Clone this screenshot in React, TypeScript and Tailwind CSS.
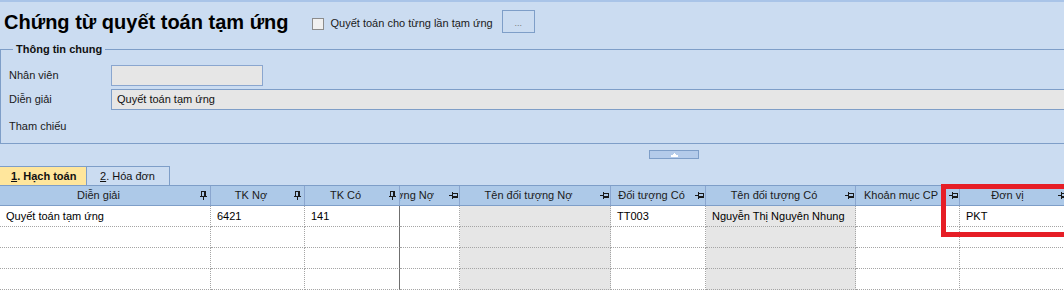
import React from "react";

type Col = { w: number; title: string; pin: "v" | "h"; gray?: boolean; clip?: boolean; solid?: boolean; val?: string };

const cols: Col[] = [
  { w: 211, title: "Diễn giải", pin: "v", val: "Quyết toán tạm ứng" },
  { w: 94, title: "TK Nợ", pin: "v", val: "6421" },
  { w: 95, title: "TK Có", pin: "v", solid: true, val: "141" },
  { w: 60, title: "Đối tượng Nợ", pin: "h", clip: true },
  { w: 151, title: "Tên đối tượng Nợ", pin: "h", gray: true },
  { w: 95, title: "Đối tượng Có", pin: "h", val: "TT003" },
  { w: 150, title: "Tên đối tượng Có", pin: "h", gray: true, val: "Nguyễn Thị Nguyên Nhung" },
  { w: 104, title: "Khoản mục CP", pin: "h" },
  { w: 109, title: "Đơn vị", pin: "h", val: "PKT" },
];

function PinV() {
  return (
    <svg width="7" height="9" viewBox="0 0 7 9" shapeRendering="crispEdges" className="block">
      <rect x="1" y="0" width="4" height="1" fill="#1a1a1a" />
      <rect x="1" y="0" width="1" height="5" fill="#1a1a1a" />
      <rect x="4" y="0" width="2" height="5" fill="#1a1a1a" />
      <rect x="0" y="5" width="7" height="1" fill="#1a1a1a" />
      <rect x="3" y="5" width="1" height="4" fill="#1a1a1a" />
    </svg>
  );
}

function PinH() {
  return (
    <svg width="9" height="7" viewBox="0 0 9 7" shapeRendering="crispEdges" className="block">
      <rect x="0" y="3" width="3" height="1" fill="#1a1a1a" />
      <rect x="3" y="0" width="1" height="7" fill="#1a1a1a" />
      <rect x="3" y="1" width="6" height="1" fill="#1a1a1a" />
      <rect x="3" y="4" width="6" height="2" fill="#1a1a1a" />
      <rect x="8" y="1" width="1" height="5" fill="#1a1a1a" />
    </svg>
  );
}

export default function App() {
  const rows = [0, 1, 2, 3];
  return (
    <div className="relative w-[1064px] h-[290px] overflow-hidden bg-[#cbdcf1] font-['Liberation_Sans',Arial,sans-serif] text-[11px] text-black">
      <div className="h-[2px] bg-[#a9c4e8]" />
      {/* Title row */}
      <div className="h-[40px] flex items-center pl-[4px] whitespace-nowrap">
        <h1 className="text-[20px] font-bold leading-none text-black">Chứng từ quyết toán tạm ứng</h1>
        <div className="ml-[23px] mt-[3px] w-[12px] h-[12px] border border-[#8c8c8c] bg-[#f0f0f0]" />
        <span className="ml-[7px] mt-[2px] text-[11px] text-[#1a1a1a]">Quyết toán cho từng lần tạm ứng</span>
        <div className="ml-[9px] -mt-[1px] w-[33px] h-[23px] border border-[#7e9ec8] flex items-center justify-center text-[9px] text-[#7a7a7a] leading-none pt-[3px]">...</div>
      </div>
      {/* Group box */}
      <fieldset className="w-[1080px] border-t border-l border-b border-r-0 border-[#7e9ec8] pl-[8px] pt-[8px] pb-[4px] m-0">
        <legend className="ml-[4px] px-[3px] text-[11px] font-bold leading-[15px] text-[#111]">Thông tin chung</legend>
        <div className="flex flex-col gap-[3px]">
          <div className="flex items-center h-[21px]">
            <div className="w-[102px] text-[#1a1a1a]">Nhân viên</div>
            <div className="w-[152px] h-[21px] border border-[#8aa6cf] bg-[#e6e6e6]" />
          </div>
          <div className="flex items-center h-[21px]">
            <div className="w-[102px] text-[#1a1a1a]">Diễn giải</div>
            <div className="flex-1 h-[21px] border border-[#7e9ec8] bg-[#e6e6e6] flex items-center pl-[5px] text-[#111]">Quyết toán tạm ứng</div>
          </div>
          <div className="flex items-center h-[26px]">
            <div className="w-[102px] text-[#1a1a1a]">Tham chiếu</div>
          </div>
        </div>
      </fieldset>
      {/* Splitter */}
      <div className="h-[22px] pl-[649px] pt-[6px]">
        <div className="w-[50px] h-[9px] border border-[#7e9ec8] bg-[#b4cbea] flex items-center justify-center">
          <svg width="7" height="4" viewBox="0 0 7 4" shapeRendering="crispEdges" className="block">
            <rect x="3" y="0" width="1" height="1" fill="#fff" />
            <rect x="2" y="1" width="3" height="1" fill="#fff" />
            <rect x="0" y="2" width="7" height="2" fill="#fff" />
          </svg>
        </div>
      </div>
      {/* Tabs */}
      <div className="flex h-[19px]">
        <div className="w-[87px] h-[19px] bg-[#ffe69c] border-t border-r border-[#7e9ec8] flex items-center pl-[11px] font-bold text-[#111]">
          <span><span className="underline">1</span>. Hạch toán</span>
        </div>
        <div className="w-[83px] h-[19px] border-t border-r border-[#7e9ec8] flex items-center pl-[13px] text-[#111]">
          <span><span className="underline">2</span>. Hóa đơn</span>
        </div>
      </div>
      {/* Grid header */}
      <div className="flex h-[21px] w-[1068px] border-y border-[#7e9ec8] bg-[#adc9e8]">
        {cols.map((c, i) => (
          <div key={i} style={{ width: c.w }} className="shrink-0 flex items-center border-r border-[#8aa6cf] h-full">
            <div className={"flex-1 h-full flex items-center overflow-hidden whitespace-nowrap text-[#1b1b1b] " + (c.clip ? "justify-end pr-[12px]" : "justify-center")}>
              {c.title}
            </div>
            <div className="w-[13px] pl-[3px] flex items-center">{c.pin === "v" ? <PinV /> : <PinH />}</div>
          </div>
        ))}
      </div>
      {/* Grid rows */}
      {rows.map((r) => (
        <div key={r} className="flex h-[21px] w-[1068px]">
          {cols.map((c, i) => (
            <div
              key={i}
              style={{ width: c.w }}
              className={
                "shrink-0 h-full border-b border-r border-dotted border-b-[#a5a5a5] flex items-center pl-[6px] whitespace-nowrap overflow-hidden " +
                (c.solid ? "[border-right-style:solid] border-r-[#6f6f6f] " : "border-r-[#a5a5a5] ") +
                (c.gray ? "bg-[#e6e6e6]" : "bg-white")
              }
            >
              {r === 0 && c.val ? c.val : ""}
            </div>
          ))}
        </div>
      ))}
      {/* Red highlight */}
      <div className="absolute left-[941px] top-[184px] w-[130px] h-[53px] border-[5px] border-[#e61e26]" />
    </div>
  );
}
